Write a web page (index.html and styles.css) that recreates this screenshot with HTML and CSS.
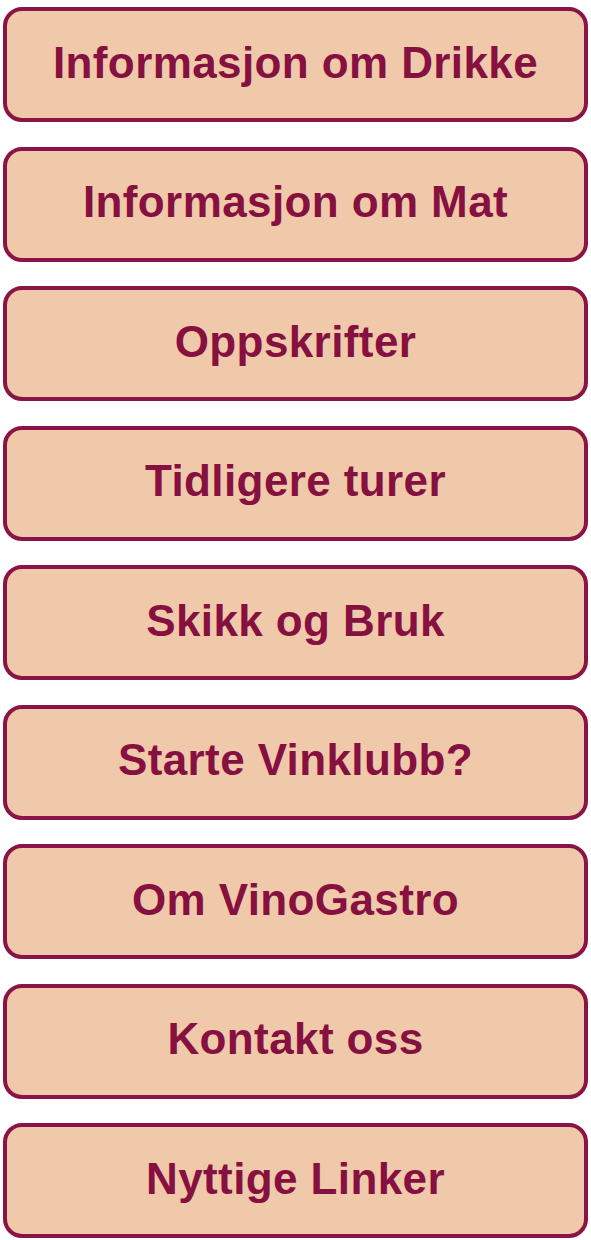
FILE: index.html
```html
<!DOCTYPE html>
<html lang="no">
<head>
  <meta charset="UTF-8" />
  <meta name="viewport" content="width=device-width, initial-scale=1.0" />
  <title>VinoGastro meny</title>
  <link rel="stylesheet" href="styles.css">
</head>
<body>
  <nav class="menu">
    <a class="menu-btn" href="#">Informasjon om Drikke</a>
    <a class="menu-btn" href="#">Informasjon om Mat</a>
    <a class="menu-btn" href="#">Oppskrifter</a>
    <a class="menu-btn" href="#">Tidligere turer</a>
    <a class="menu-btn" href="#">Skikk og Bruk</a>
    <a class="menu-btn" href="#">Starte Vinklubb?</a>
    <a class="menu-btn" href="#">Om VinoGastro</a>
    <a class="menu-btn" href="#">Kontakt oss</a>
    <a class="menu-btn" href="#">Nyttige Linker</a>
  </nav>
</body>
</html>
```

FILE: styles.css
```css
body {
  margin: 0;
  background: #fff;
  font-family: 'Liberation Sans', Arial, sans-serif;
}
.menu {
  display: flex;
  flex-direction: column;
  gap: 24.5px;
  padding: 7px 3px 0 3px;
}
.menu-btn {
  display: flex;
  align-items: center;
  justify-content: center;
  height: 115px;
  box-sizing: border-box;
  background: #f0c9aa;
  border: 4px solid #8a1446;
  border-radius: 19px;
  color: #86103f;
  font-size: 44px;
  font-weight: bold;
  letter-spacing: 0.4px;
  text-decoration: none;
  padding-bottom: 4px;
}
```
